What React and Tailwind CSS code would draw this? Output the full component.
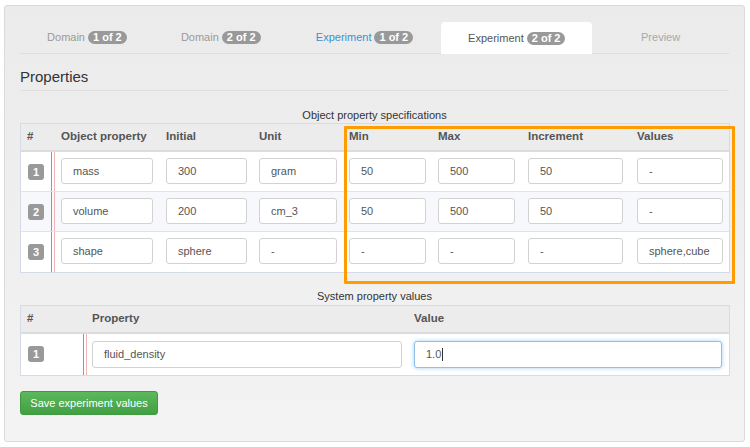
import React from "react";

const tabs = [
  { label: "Domain", badge: "1 of 2", w: "w-[134px]", tone: "text-[#9a9a9a]" },
  { label: "Domain", badge: "2 of 2", w: "w-[134px]", tone: "text-[#9a9a9a]" },
  { label: "Experiment", badge: "1 of 2", w: "w-[154px]", tone: "text-[#3b8fd0]" },
  { label: "Experiment", badge: "2 of 2", w: "w-[151px]", tone: "text-[#555]", active: true },
  { label: "Preview", w: "w-[137px]", tone: "text-[#a8a8a8]" },
];

const objectRows = [
  { n: 1, name: "mass", initial: "300", unit: "gram", min: "50", max: "500", inc: "50", values: "-" },
  { n: 2, name: "volume", initial: "200", unit: "cm_3", min: "50", max: "500", inc: "50", values: "-" },
  { n: 3, name: "shape", initial: "sphere", unit: "-", min: "-", max: "-", inc: "-", values: "sphere,cube" },
];

const Field = ({ value, className = "", focus }) => (
  <div
    className={`h-[26px] rounded-[3px] bg-white flex items-center pl-[11px] text-[11px] text-[#555] ${
      focus
        ? "border border-[#8fc0ea] shadow-[0_0_4px_rgba(102,175,233,0.6)]"
        : "border border-[#d2d2d2]"
    } ${className}`}
  >
    {value}
    {focus && <span className="w-px h-[13px] bg-[#333] ml-px" />}
  </div>
);

const Badge = ({ n }) => (
  <span className="inline-flex items-center justify-center w-[16px] h-[16px] rounded-[3px] bg-[#999] text-white text-[11px] font-bold">
    {n}
  </span>
);

const RedRule = () => (
  <div className="self-stretch w-[4px] border-l border-l-[#e07a7a] border-r border-r-[#f2b4b4]" />
);

export default function App() {
  return (
    <div
      className="relative w-[750px] h-[447px] bg-white overflow-hidden"
      style={{ fontFamily: '"Liberation Sans", Arial, sans-serif' }}
    >
      <div className="absolute left-[4px] top-[5px] w-[741px] h-[437px] rounded-[3px] border border-[#dadada] bg-gradient-to-b from-[#ebebeb] to-[#f3f3f3] px-[15px] pt-[16px]">
        {/* Tabs */}
        <div className="flex h-[32px] border-b border-[#dedede]">
          {tabs.map((t, i) => (
            <div
              key={i}
              className={`${t.w} flex items-center justify-center gap-[3px] text-[11px] ${t.tone} ${
                t.active ? "bg-white rounded-t-[4px] -mb-px" : ""
              }`}
            >
              <span>{t.label}</span>
              {t.badge && (
                <span className="h-[13px] px-[5px] rounded-full bg-[#999] text-white text-[11px] font-bold leading-[13px]">
                  {t.badge}
                </span>
              )}
            </div>
          ))}
        </div>

        {/* Heading */}
        <div className="h-[37px] border-b border-[#e0e0e0] flex items-end pb-[2px]">
          <h2 className="text-[15px] text-[#333]">Properties</h2>
        </div>

        {/* Object property table */}
        <div className="mt-[17px] text-center text-[11px] text-[#333] leading-[14px]">
          Object property specifications
        </div>
        <div className="mt-[1px] w-[710px] border border-[#d5dbe8] bg-white">
          <div className="flex h-[28px] items-center bg-[#ececec] border-b-2 border-[#dcdcdc] text-[11.5px] font-bold text-[#555]">
            <div className="w-[40px] pl-[6px]">#</div>
            <div className="w-[105px]">Object property</div>
            <div className="w-[93px]">Initial</div>
            <div className="w-[90px]">Unit</div>
            <div className="w-[89px]">Min</div>
            <div className="w-[90px]">Max</div>
            <div className="w-[109px]">Increment</div>
            <div className="w-[80px]">Values</div>
          </div>
          {objectRows.map((r, i) => (
            <div
              key={r.n}
              className={`flex h-[40px] ${i < 2 ? "border-b border-[#dfe3ee]" : ""} ${
                i === 1 ? "bg-[#f7f8fb]" : "bg-white"
              }`}
            >
              <div className="w-[30px] pl-[7px] pt-[7px]">
                <Badge n={r.n} />
              </div>
              <RedRule />
              <div className="flex pt-[6px] pl-[6px]">
                <Field value={r.name} className="w-[92px]" />
                <Field value={r.initial} className="w-[81px] ml-[13px]" />
                <Field value={r.unit} className="w-[78px] ml-[12px]" />
                <Field value={r.min} className="w-[77px] ml-[12px]" />
                <Field value={r.max} className="w-[77px] ml-[12px]" />
                <Field value={r.inc} className="w-[95px] ml-[13px]" />
                <Field value={r.values} className="w-[86px] ml-[14px]" />
              </div>
            </div>
          ))}
        </div>

        {/* System property table */}
        <div className="mt-[16px] text-center text-[11px] text-[#333] leading-[14px]">
          System property values
        </div>
        <div className="mt-[2px] w-[710px] border border-[#d5dbe8] bg-white">
          <div className="flex h-[28px] items-center bg-[#ececec] border-b-2 border-[#dcdcdc] text-[11.5px] font-bold text-[#555]">
            <div className="w-[71px] pl-[6px]">#</div>
            <div className="w-[322px]">Property</div>
            <div>Value</div>
          </div>
          <div className="flex h-[41px]">
            <div className="w-[62px] pl-[7px] pt-[7px]">
              <Badge n={1} />
            </div>
            <RedRule />
            <div className="flex pt-[7px] pl-[5px]">
              <Field value="fluid_density" className="w-[310px] h-[27px]" />
              <Field value="1.0" focus className="w-[308px] h-[27px] ml-[12px]" />
            </div>
          </div>
        </div>

        <button className="mt-[15px] h-[24px] w-[138px] rounded-[3px] border border-[#3f9a3f] bg-gradient-to-b from-[#5cb85c] to-[#439f43] text-white text-[11px]">
          Save experiment values
        </button>
      </div>

      {/* Highlight box */}
      <div className="absolute left-[344px] top-[126px] w-[391px] h-[158px] border-[3px] border-[#ff9d00] rounded-[1px]" />
    </div>
  );
}
